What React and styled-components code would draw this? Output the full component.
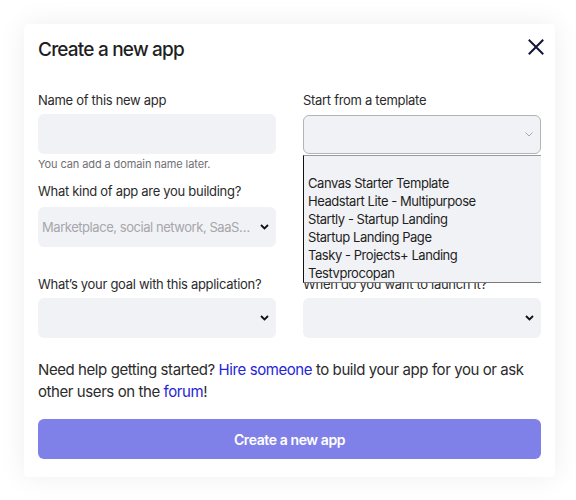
import React from "react";
import styled, { createGlobalStyle } from "styled-components";

const Global = createGlobalStyle`
  html, body { margin: 0; padding: 0; background: #ffffff; }
  body { font-family: Inter, "Noto Sans", sans-serif; color: #2b2b2b; }
  * { box-sizing: border-box; }
`;

const Page = styled.div`
  width: 576px;
  height: 500px;
  padding: 24px 21px 24px 24px;
  background: #ffffff;
`;

const Card = styled.div`
  position: relative;
  width: 531px;
  background: #fff;
  border-radius: 4px;
  box-shadow: 0 0 28px rgba(0, 0, 0, 0.07);
  padding: 14px 14px 18px 14px;
`;

const Header = styled.div`
  display: flex;
  justify-content: space-between;
  align-items: flex-start;
`;

const Title = styled.h2`
  margin: 0;
  font-size: 19px;
  line-height: 24px;
  font-weight: 500;
  letter-spacing: -0.8px;
  color: #1f1f1f;
`;

const Close = styled.button`
  border: 0;
  background: none;
  padding: 0;
  margin: -1px -5px 0 0;
  width: 20px;
  height: 20px;
  display: flex;
  align-items: center;
  justify-content: center;
  cursor: pointer;
`;

const Grid = styled.div`
  display: grid;
  grid-template-columns: 238px 238px;
  column-gap: 27px;
  margin-top: 30px;
`;

const Field = styled.div`
  position: relative;
  display: flex;
  flex-direction: column;
  margin-top: ${(p) => p.$mt || 0}px;
`;

const Label = styled.div`
  font-size: 13px;
  line-height: 16px;
  color: #2b2b2b;
  letter-spacing: -0.3px;
  margin-bottom: ${(p) => p.$mb || 6}px;
  white-space: nowrap;
`;

const Input = styled.div`
  height: 40px;
  background: #f1f2f5;
  border-radius: 6px;
`;

const Help = styled.div`
  font-size: 11px;
  line-height: 14px;
  color: #6f6f73;
  margin-top: 3px;
  letter-spacing: -0.1px;
`;

const Select = styled.div`
  height: ${(p) => (p.$focused ? 39 : 40)}px;
  background: #f1f2f5;
  border-radius: 6px;
  border: ${(p) => (p.$focused ? "1px solid #b4b4b8" : "none")};
  display: flex;
  align-items: center;
  justify-content: space-between;
  padding: 0 ${(p) => (p.$focused ? 6 : 7)}px 0 4px;
`;

const Placeholder = styled.span`
  font-size: 13px;
  color: #a6a6ab;
  letter-spacing: -0.45px;
  white-space: nowrap;
`;

const ListBox = styled.div`
  position: absolute;
  left: 0;
  right: 0;
  top: 63px;
  background: #f1f2f5;
  border-left: 1px solid #111;
  border-bottom: 1px solid #7a7a7a;
  border-top: 1px solid #9a9a9a;
  z-index: 5;
`;

const Option = styled.div`
  height: 18px;
  line-height: 18px;
  font-size: 13px;
  padding-left: 4px;
  color: #1e1e1e;
  letter-spacing: -0.45px;
  white-space: nowrap;
`;

const Para = styled.p`
  margin: 21px 0 0;
  font-size: 15px;
  line-height: 22px;
  color: #2b2b2b;
  letter-spacing: -0.42px;
`;

const Link = styled.a`
  color: #2525d6;
  text-decoration: none;
`;

const Button = styled.button`
  display: block;
  width: 100%;
  height: 40px;
  margin-top: 16px;
  border: 0;
  border-radius: 6px;
  background: #7f80e8;
  color: #fff;
  font-family: Inter, "Noto Sans", sans-serif;
  font-size: 14px;
  font-weight: 600;
  letter-spacing: -0.4px;
`;

const Chevron = ({ light }) =>
  light ? (
    <svg width="10" height="7" viewBox="0 0 10 7">
      <path d="M1.5 1.5 L5 5 L8.5 1.5" fill="none" stroke="#a8a8ad" strokeWidth="1" />
    </svg>
  ) : (
    <svg width="9" height="6" viewBox="0 0 9 6">
      <path d="M1 1 L4.5 4.5 L8 1" fill="none" stroke="#111" strokeWidth="1.8" />
    </svg>
  );

const options = [
  "",
  "Canvas Starter Template",
  "Headstart Lite - Multipurpose",
  "Startly - Startup Landing",
  "Startup Landing Page",
  "Tasky - Projects+ Landing",
  "Testvprocopan",
];

export default function App() {
  return (
    <>
      <Global />
      <Page>
        <Card>
          <Header>
            <Title>Create a new app</Title>
            <Close aria-label="Close">
              <svg width="16" height="16" viewBox="0 0 16 16">
                <path d="M1.5 1.5 L14.5 14.5 M14.5 1.5 L1.5 14.5" stroke="#14143a" strokeWidth="2" strokeLinecap="square" />
              </svg>
            </Close>
          </Header>
          <Grid>
            <Field>
              <Label>Name of this new app</Label>
              <Input />
              <Help>You can add a domain name later.</Help>
            </Field>
            <Field>
              <Label $mb={7}>Start from a template</Label>
              <Select $focused>
                <span />
                <Chevron light />
              </Select>
              <ListBox>
                {options.map((o, i) => (
                  <Option key={i}>{o}</Option>
                ))}
              </ListBox>
            </Field>
            <Field $mt={12}>
              <Label $mb={8}>What kind of app are you building?</Label>
              <Select>
                <Placeholder>Marketplace, social network, SaaS…</Placeholder>
                <Chevron />
              </Select>
            </Field>
            <div />
            <Field $mt={29}>
              <Label>What’s your goal with this application?</Label>
              <Select>
                <span />
                <Chevron />
              </Select>
            </Field>
            <Field $mt={29}>
              <Label>When do you want to launch it?</Label>
              <Select>
                <span />
                <Chevron />
              </Select>
            </Field>
          </Grid>
          <Para>
            Need help getting started? <Link href="#">Hire someone</Link> to build your app for you or ask
            other users on the <Link href="#">forum</Link>!
          </Para>
          <Button>Create a new app</Button>
        </Card>
      </Page>
    </>
  );
}
